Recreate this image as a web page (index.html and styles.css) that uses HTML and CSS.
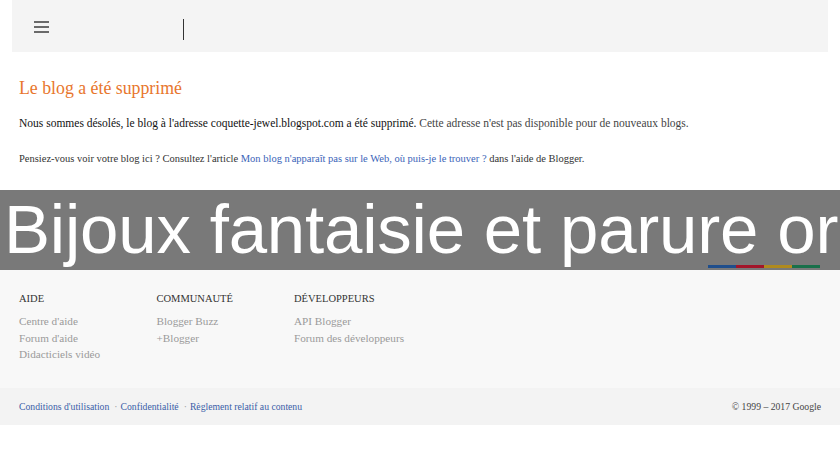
FILE: index.html
```html
<!DOCTYPE html>
<html lang="fr">
<head>
<meta charset="utf-8">
<link rel="stylesheet" href="styles.css">
</head>
<body>
<div class="page">
  <header class="topbar">
    <span class="burger"><i></i><i></i><i></i></span>
    <span class="caret"></span>
  </header>
  <main class="content">
    <h1 class="title">Le blog a été supprimé</h1>
    <p class="msg">Nous sommes désolés, le blog à l'adresse coquette-jewel.blogspot.com a été supprimé. <span class="soft">Cette adresse n'est pas disponible pour de nouveaux blogs.</span></p>
    <p class="hint">Pensiez-vous voir votre blog ici ? Consultez l'article <a href="#">Mon blog n'apparaît pas sur le Web, où puis-je le trouver ?</a> dans l'aide de Blogger.</p>
  </main>
  <div class="banner">
    <span class="banner-text">Bijoux fantaisie et parure or</span>
    <span class="stripe"><i class="b"></i><i class="r"></i><i class="y"></i><i class="g"></i></span>
  </div>
  <footer class="footer">
    <div class="cols">
      <div class="col">
        <h3>AIDE</h3>
        <a href="#">Centre d'aide</a>
        <a href="#">Forum d'aide</a>
        <a href="#">Didacticiels vidéo</a>
      </div>
      <div class="col">
        <h3>COMMUNAUTÉ</h3>
        <a href="#">Blogger Buzz</a>
        <a href="#">+Blogger</a>
      </div>
      <div class="col">
        <h3>DÉVELOPPEURS</h3>
        <a href="#">API Blogger</a>
        <a href="#">Forum des développeurs</a>
      </div>
    </div>
  </footer>
  <div class="legal">
    <div class="links"><a href="#">Conditions d'utilisation</a><span class="dot">·</span><a href="#">Confidentialité</a><span class="dot">·</span><a href="#">Règlement relatif au contenu</a></div>
    <div class="copy">© 1999 – 2017 Google</div>
  </div>
</div>
</body>
</html>
```
FILE: styles.css
```css
html, body { margin: 0; padding: 0; background: #fff; }
body { font-family: "Liberation Serif", "DejaVu Serif", serif; color: #222; }
.page { width: 840px; height: 460px; overflow: hidden; }

.topbar {
  margin: 0 12px;
  height: 52px;
  background: #f4f4f4;
  display: flex;
  align-items: flex-start;
}
.burger {
  display: flex; flex-direction: column; gap: 3px;
  width: 15px; margin: 21px 0 0 22px;
}
.burger i { display: block; height: 2px; background: #6a6a6a; }
.caret { width: 1px; height: 21px; background: #333; margin: 19px 0 0 134px; }

.content { padding: 0 19px; height: 138px; }
.title {
  margin: 0; padding-top: 25px;
  font-size: 17.8px; font-weight: normal; color: #e8762d; line-height: 22px;
}
.msg { margin: 17px 0 0; font-size: 11.5px; line-height: 14px; color: #111; }
.msg .soft { color: #444; }
.hint { margin: 22px 0 0; font-size: 10.5px; line-height: 14px; color: #333; }
.hint a { color: #3a63b8; text-decoration: none; }

.banner {
  position: relative;
  height: 80px;
  background: #797979;
  display: flex; align-items: center;
  overflow: hidden;
}
.banner-text {
  font-family: "Liberation Sans", Arial, sans-serif;
  color: #fff; font-size: 69px; line-height: 80px;
  padding-left: 4px; white-space: nowrap;
  letter-spacing: -0.2px;
}
.stripe { position: absolute; left: 708px; top: 75px; display: flex; height: 3px; }
.stripe i { display: block; width: 28px; height: 3px; }
.stripe .b { background: #1f4e8c; }
.stripe .r { background: #a3152a; }
.stripe .y { background: #b08a1e; }
.stripe .g { background: #18704a; }

.footer { background: #f8f8f8; height: 118px; padding: 0 19px; }
.cols { display: flex; padding-top: 22px; }
.col { width: 137.5px; display: flex; flex-direction: column; }
.col h3 { margin: 0 0 7px; font-size: 10.5px; font-weight: normal; color: #333; line-height: 14px; }
.col a { font-size: 11.2px; color: #9a9a9a; text-decoration: none; line-height: 16.5px; }

.legal {
  background: #f3f3f3; height: 37px;
  display: flex; align-items: center; justify-content: space-between;
  padding: 0 19px;
  font-size: 9.7px;
}
.legal a { color: #3a5ea8; text-decoration: none; }
.legal .dot { color: #999; margin: 0 3px 0 5px; }
.copy { color: #444; }
```
